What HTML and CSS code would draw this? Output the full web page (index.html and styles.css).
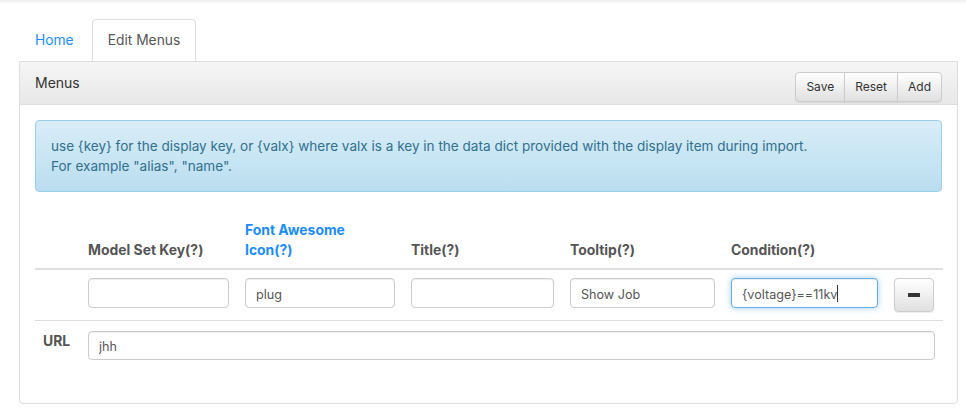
FILE: index.html
```html
<!DOCTYPE html>
<html>
<head>
<meta charset="utf-8">
<link rel="stylesheet" href="styles.css">
</head>
<body>
<div class="topbar"></div>
<div class="content">
  <ul class="tabs">
    <li><a class="tab-link" href="#">Home</a></li>
    <li><a class="tab-link active" href="#">Edit Menus</a></li>
  </ul>
  <div class="panel">
    <div class="panel-heading">
      <span class="panel-title">Menus</span>
      <div class="btn-group">
        <button class="btn">Save</button>
        <button class="btn">Reset</button>
        <button class="btn">Add</button>
      </div>
    </div>
    <div class="panel-body">
      <div class="alert">use {key} for the display key, or {valx} where valx is a key in the data dict provided with the display item during import.<br>For example "alias", "name".</div>
      <table class="grid">
        <colgroup>
          <col class="c0"><col class="c1"><col class="c2"><col class="c3"><col class="c4"><col class="c5"><col class="c6">
        </colgroup>
        <thead>
          <tr>
            <th></th>
            <th>Model Set Key(?)</th>
            <th class="link">Font Awesome<br>Icon(?)</th>
            <th>Title(?)</th>
            <th>Tooltip(?)</th>
            <th>Condition(?)</th>
            <th></th>
          </tr>
        </thead>
        <tbody>
          <tr class="row-main">
            <td></td>
            <td><input class="field" type="text" value=""></td>
            <td><input class="field" type="text" value="plug"></td>
            <td><input class="field" type="text" value=""></td>
            <td><input class="field" type="text" value="Show Job"></td>
            <td><span class="caret-wrap"><input class="field focused" type="text" value="{voltage}==11kv"><span class="caret"></span></span></td>
            <td><button class="btn-minus"><svg width="12" height="4" viewBox="0 0 12 4"><rect x="0" y="0" width="12" height="4" rx="0.5" fill="#333"/></svg></button></td>
          </tr>
          <tr class="row-url">
            <td class="label">URL</td>
            <td colspan="6"><input class="field" type="text" value="jhh"></td>
          </tr>
        </tbody>
      </table>
    </div>
  </div>
</div>
</body>
</html>
```
FILE: styles.css
```css
* { box-sizing: border-box; }
html, body { margin: 0; padding: 0; background: #fff; }
body {
  font-family: Inter, "Noto Sans", "Liberation Sans", sans-serif;
  font-size: 14px;
  line-height: 20px;
  color: #333;
}
.topbar {
  height: 4px;
  background: linear-gradient(#eeeeee, #ffffff);
}
.content {
  padding: 15px 8px 0 19px;
}
.tabs {
  list-style: none;
  margin: 0;
  padding: 0;
  display: flex;
  gap: 2px;
}
.tab-link {
  display: block;
  padding: 10px 15px 11px;
  color: #1a8cff;
  text-decoration: none;
  border: 1px solid transparent;
  border-bottom: none;
  border-radius: 4px 4px 0 0;
  font-size: 13.8px;
}
.tab-link.active {
  color: #555;
  border-color: #ddd;
  background: #fff;
}
.panel {
  border: 1px solid #ddd;
  border-radius: 0 0 4px 4px;
  background: #fff;
}
.panel-heading {
  display: flex;
  justify-content: space-between;
  align-items: flex-end;
  height: 43px;
  padding: 0 15px 2px;
  border-bottom: 1px solid #ddd;
  background: linear-gradient(#f5f5f5, #e8e8e8);
}
.panel-title {
  align-self: center;
  font-size: 14px;
  color: #333;
  margin-top: 1px;
}
.btn-group {
  display: flex;
}
.btn {
  font-family: inherit;
  font-size: 12px;
  line-height: 18px;
  height: 30px;
  padding: 5px 10px;
  color: #333;
  border: 1px solid #ccc;
  background: linear-gradient(#ffffff, #e0e0e0);
  box-shadow: inset 0 1px 0 rgba(255,255,255,.15), 0 1px 1px rgba(0,0,0,.075);
  margin-left: -1px;
  border-radius: 0;
}
.btn:first-child { border-radius: 4px 0 0 4px; margin-left: 0; }
.btn:last-child { border-radius: 0 4px 4px 0; }
.panel-body {
  padding: 15px 15px 15px;
}
.alert {
  padding: 15px;
  border: 1px solid #9acfea;
  border-radius: 4px;
  background: linear-gradient(#d9edf7, #b9def0);
  color: #31708f;
  font-size: 13.55px;
  line-height: 20px;
  margin-bottom: 20px;
}
.grid {
  width: 100%;
  border-collapse: collapse;
  table-layout: fixed;
  margin-bottom: 20px;
}
.c0 { width: 45px; }
.c1 { width: 157px; }
.c2 { width: 166px; }
.c3 { width: 159px; }
.c4 { width: 161px; }
.c5 { width: 163px; }
.c6 { width: 57px; }
.grid th {
  text-align: left;
  vertical-align: bottom;
  padding: 8px;
  font-size: 13.9px;
  line-height: 20px;
  font-weight: 700;
  color: #555;
  border-bottom: 2px solid #ddd;
}
.grid th.link { color: #1a8cff; }
.grid td {
  padding: 8px;
  vertical-align: top;
}
.row-main td {
  border-bottom: 1px solid #ddd;
}
.row-url td { padding-top: 10px; }
.grid td.label {
  font-size: 13.9px;
  font-weight: 700;
  color: #555;
  padding-top: 10px;
}
.field {
  display: block;
  width: 100%;
  height: 30px;
  padding: 6px 10px 4px;
  font-family: inherit;
  font-size: 12.6px;
  line-height: 18px;
  color: #555;
  background: #fff;
  border: 1px solid #ccc;
  border-radius: 4px;
  box-shadow: inset 0 1px 1px rgba(0,0,0,.075);
  outline: none;
}
.row-url .field { height: 29px; }
.field.focused {
  border-color: #66afe9;
  box-shadow: inset 0 1px 1px rgba(0,0,0,.075), 0 0 6px rgba(102,175,233,.6);
}
.caret-wrap {
  position: relative;
  display: block;
}
.caret {
  position: absolute;
  left: 106px;
  top: 7px;
  width: 1px;
  height: 17px;
  background: #333;
}
.btn-minus {
  display: flex;
  align-items: center;
  justify-content: center;
  width: 40px;
  height: 34px;
  padding: 0;
  border: 1px solid #ccc;
  border-radius: 4px;
  background: linear-gradient(#ffffff, #e0e0e0);
  box-shadow: 0 1px 1px rgba(0,0,0,.075);
}
```
